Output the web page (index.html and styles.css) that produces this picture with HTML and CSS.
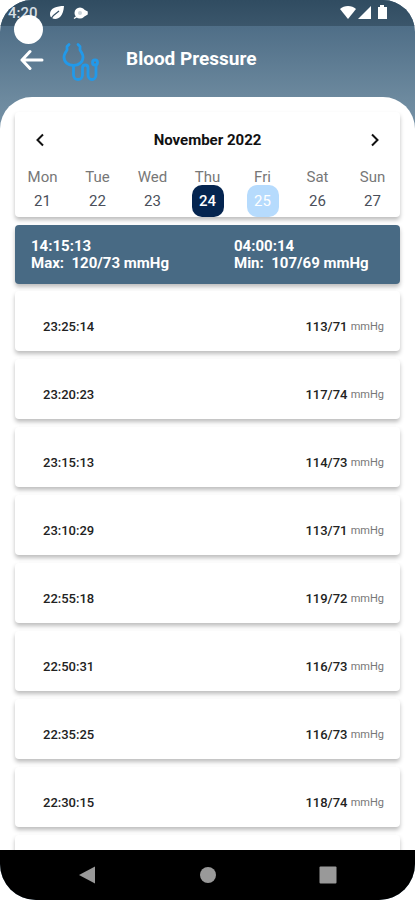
FILE: index.html
```html
<!DOCTYPE html>
<html lang="en">
<head>
    <meta charset="utf-8">
    <meta name="viewport" content="width=device-width, initial-scale=1">
    <title>Blood Pressure</title>
    <link rel="stylesheet" href="styles.css">
</head>
<body>
    <div class="phone">
        <div class="status-bar">
            <span class="clock">4:20</span>
            <svg class="status-leaf" width="16" height="16" viewBox="0 0 16 16">
                <path d="M15 1C8 1 1 3 1 9c0 2 1 4 2 4 3 2 11 2 12-12z" fill="#fff"/>
                <path d="M1 15C4 10 7 8 10 6" stroke="#3a5468" stroke-width="1.4" fill="none"/>
            </svg>
            <svg class="status-dot" width="16" height="14" viewBox="0 0 16 14">
                <circle cx="7" cy="7" r="5.500" fill="#fff"/>
                <path d="M1 12.500l3-2M11 4.500l3 1.500v2l-3 2" fill="#fff" stroke="#fff" stroke-width="1.5"/>
                <circle cx="7" cy="7" r="2" fill="#ccd5db"/>
            </svg>
            <svg class="status-icons" width="50" height="16" viewBox="0 0 50 16">
                <path d="M1 4C5 0 13 0 17 4L9 14z" fill="#fff"/>
                <path d="M32 1v13H19z" fill="#fff"/>
                <path d="M41 0h4v2h3v12h-9V2h2z" fill="#fff"/>
            </svg>
            <span class="camera"></span>
        </div>

        <header class="header">
            <button type="button" class="back" aria-label="Back">
                <svg width="24" height="22" viewBox="0 0 24 22" fill="none" stroke="#fff" stroke-width="3" stroke-linecap="round" stroke-linejoin="round">
                    <path d="M22 11H2M10 2.5L2 11l8 8.5"/>
                </svg>
            </button>
            <svg class="logo" width="38" height="40" viewBox="0 0 38 40" fill="none" stroke="#2299e9" stroke-width="2.8" stroke-linecap="round" stroke-linejoin="round">
                <path d="M7 2.500L5 4.500V8c-2 3-3 5-3 7 0 5 4 8.500 9.500 8.500S21 20 21 15c0-2-1-4-3-7V4.500L16 2.500"/>
                <path d="M11.500 24v9c0 6 9 6 9 0v-7c0-4 5.500-4 5.500 0v7c0 6 8 6 8 0V24"/>
                <circle cx="33" cy="20.500" r="2.500"/>
            </svg>
            <h1 class="title">Blood Pressure</h1>
        </header>

        <main class="sheet">
            <section class="card calendar">
                <div class="month">
                    <button type="button" aria-label="Previous week">
                        <svg width="8" height="14" viewBox="0 0 8 14" fill="none" stroke="#111" stroke-width="2"><path d="M7 1.500L1.500 7 7 12.500"/></svg>
                    </button>
                    <h2>November 2022</h2>
                    <button type="button" aria-label="Next week">
                        <svg width="8" height="14" viewBox="0 0 8 14" fill="none" stroke="#111" stroke-width="2"><path d="M1 1.500L6.500 7 1 12.500"/></svg>
                    </button>
                </div>
                <div class="week">
                    <div class="day">Mon<button type="button">21</button></div>
                    <div class="day">Tue<button type="button">22</button></div>
                    <div class="day">Wed<button type="button">23</button></div>
                    <div class="day">Thu<button type="button" class="selected">24</button></div>
                    <div class="day">Fri<button type="button" class="today">25</button></div>
                    <div class="day">Sat<button type="button">26</button></div>
                    <div class="day">Sun<button type="button">27</button></div>
                </div>
            </section>

            <section class="card summary">
                <div>14:15:13<br>Max:&nbsp; 120/73 mmHg</div>
                <div>04:00:14<br>Min:&nbsp; 107/69 mmHg</div>
            </section>

            <div class="readings">
                <div class="card reading"><span>23:25:14</span><span>113/71 <small>mmHg</small></span></div>
                <div class="card reading"><span>23:20:23</span><span>117/74 <small>mmHg</small></span></div>
                <div class="card reading"><span>23:15:13</span><span>114/73 <small>mmHg</small></span></div>
                <div class="card reading"><span>23:10:29</span><span>113/71 <small>mmHg</small></span></div>
                <div class="card reading"><span>22:55:18</span><span>119/72 <small>mmHg</small></span></div>
                <div class="card reading"><span>22:50:31</span><span>116/73 <small>mmHg</small></span></div>
                <div class="card reading"><span>22:35:25</span><span>116/73 <small>mmHg</small></span></div>
                <div class="card reading"><span>22:30:15</span><span>118/74 <small>mmHg</small></span></div>
                <div class="card reading"></div>
            </div>
        </main>

        <nav class="nav-bar">
            <button type="button" aria-label="Back">
                <svg width="18" height="18" viewBox="0 0 18 18" fill="#999"><path d="M17 0.500v17L1 9z"/></svg>
            </button>
            <button type="button" aria-label="Home">
                <svg width="18" height="18" viewBox="0 0 18 18" fill="#999"><circle cx="9" cy="9" r="8"/></svg>
            </button>
            <button type="button" aria-label="Recent apps">
                <svg width="18" height="18" viewBox="0 0 18 18" fill="#999"><rect x="0.500" y="0.500" width="17" height="17" rx="1"/></svg>
            </button>
        </nav>
    </div>
</body>
</html>
```
FILE: styles.css
```css
* { box-sizing: border-box; }
body { margin: 0; background: #fff; font-family: Roboto, sans-serif; color: #222; }
h1, h2 { margin: 0; }
button { padding: 0; border: 0; background: none; font: inherit; color: inherit; display: flex; align-items: center; justify-content: center; cursor: pointer; }

.phone { height: 100vh; display: flex; flex-direction: column; overflow: hidden; border-radius: 32px 32px 36px 36px; background: linear-gradient(#4f6e87 26px, #6c899e 98px, #7692a7 130px); }

/* status bar */
.status-bar { position: relative; flex: none; height: 26px; padding: 0 26px 0 8px; display: flex; align-items: center; background: linear-gradient(#304c61, #3b566b); }
.clock { width: 41px; color: #d5dde3; font-size: 15px; font-weight: 500; line-height: 26px; }
.status-dot { margin-left: 8px; }
.status-icons { margin-left: auto; }
.camera { position: absolute; left: 14px; top: 15px; width: 29px; height: 29px; border-radius: 50%; background: #fff; }

/* header */
.header { flex: none; height: 71px; padding: 0 20px; display: flex; align-items: center; }
.logo { margin-left: 18px; }
.title { margin-left: 26px; padding-bottom: 5px; color: #fff; font-size: 19px; font-weight: 700; line-height: 24px; }
.back { padding-bottom: 4px; }

/* content */
.sheet { flex: 1; min-height: 0; overflow: hidden; padding: 15px 15px 0; background: #fff; border-radius: 32px 32px 0 0; }
.card { border-radius: 4px; background: #fff; box-shadow: 0 3px 4px rgba(0, 0, 0, 0.26); }

.calendar { height: 105px; padding-top: 18px; }
.month { display: flex; align-items: center; justify-content: space-between; padding: 0 21px; height: 20px; }
.month h2 { color: #111; font-size: 15px; font-weight: 700; line-height: 20px; }
.week { display: grid; grid-template-columns: repeat(7, 1fr); margin-top: 19px; }
.day { display: flex; flex-direction: column; align-items: center; color: #777; font-size: 15px; line-height: 16px; }
.day button { width: 32px; height: 32px; border-radius: 10px; color: #4a4f5a; }
.day .selected { background: #052550; color: #fff; font-weight: 500; }
.day .today { background: #b6dbfd; color: #fff; }

.summary { display: grid; grid-template-columns: 203px 1fr; height: 59px; margin-top: 8px; padding: 13px 16px; background: #486a84; color: #fff; font-size: 15px; font-weight: 700; line-height: 17px; }

.readings { display: flex; flex-direction: column; gap: 8px; margin-top: 7px; }
.reading { flex: none; display: flex; justify-content: space-between; height: 60px; padding: 26px 16px 0 28px; font-size: 13px; font-weight: 500; line-height: 20px; }
.reading small { color: #777; font-size: 11px; font-weight: 400; vertical-align: 1px; line-height: 12px; }

/* navigation bar */
.nav-bar { flex: none; height: 50px; padding: 0 78px; display: flex; justify-content: space-between; align-items: center; background: #000; }
```
